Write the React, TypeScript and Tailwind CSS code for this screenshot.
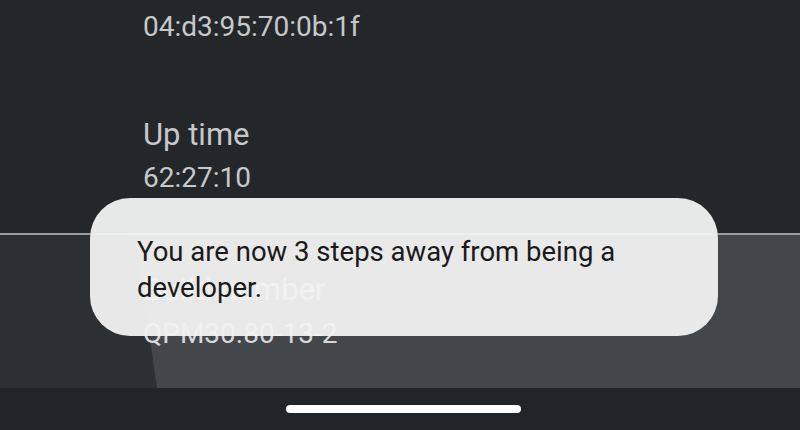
import React from 'react';

const App: React.FC = () => {
  return (
    <div className="relative h-[430px] w-[800px] overflow-hidden bg-[#23272a] font-['Roboto',sans-serif]">
      <div className="flex h-full flex-col">
        {/* previous items */}
        <div className="h-[233px] pl-[143px] text-[#c6c8ca]">
          <div className="pt-[10px] text-[28px] leading-[34px]">04:d3:95:70:0b:1f</div>
          <div className="mt-[73px] text-[31px] leading-[36px]">Up time</div>
          <div className="mt-[8px] text-[28px] leading-[34px]">62:27:10</div>
        </div>

        <div className="h-[2px] bg-[#9a9c9e]" />

        {/* pressed item */}
        <div className="relative flex-1 bg-[#2c3033]">
          <div className="absolute inset-0 bg-[#43474a] [clip-path:polygon(135px_0,100%_0,100%_100%,157px_100%)]" />
          <div className="relative pl-[143px] pt-[37px] text-[#d6d8da]">
            <div className="text-[31px] leading-[36px]">Build number</div>
            <div className="mt-[9px] text-[28px] leading-[34px]">QPM30.80-13-2</div>
          </div>
        </div>

        {/* nav bar */}
        <div className="flex h-[42px] items-center justify-center bg-[#212528]">
          <div className="ml-[7px] h-[8px] w-[235px] rounded-full bg-white" />
        </div>
      </div>

      {/* toast */}
      <div className="absolute left-[90px] top-[198px] h-[138px] w-[628px] rounded-[40px] bg-[#f2f2f2]/95 pl-[47px] pr-[30px] pt-[36px]">
        <p className="text-[27.5px] leading-[36px] text-[#1a1a1a]">
          You are now 3 steps away from being a developer.
        </p>
      </div>
    </div>
  );
};

export default App;
